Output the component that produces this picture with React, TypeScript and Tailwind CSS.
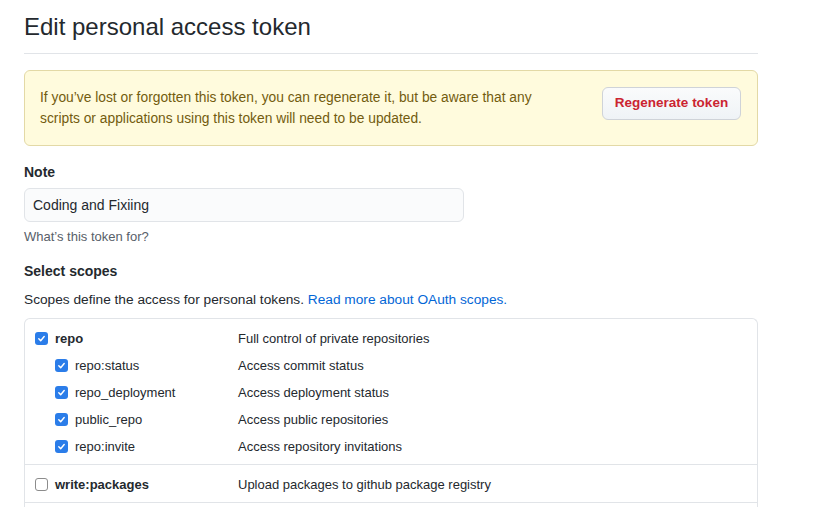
import React from "react";

const font = { fontFamily: '"Liberation Sans", Arial, sans-serif' };

function Check({ checked }: { checked: boolean }) {
  if (checked) {
    return (
      <span className="flex h-[13px] w-[13px] shrink-0 items-center justify-center rounded-[3px] bg-[#2b7de9]">
        <svg width="9" height="9" viewBox="0 0 10 10" fill="none">
          <path d="M2 5.3 L4.1 7.4 L8 2.8" stroke="white" strokeWidth="1.6" strokeLinecap="round" strokeLinejoin="round" />
        </svg>
      </span>
    );
  }
  return <span className="block h-[13px] w-[13px] shrink-0 rounded-[3px] border border-[#8c8c8c] bg-white" />;
}

type Row = { name: string; desc: string; sub?: boolean; checked: boolean; bold?: boolean };

function ScopeRow({ r }: { r: Row }) {
  return (
    <div className="flex h-[27px] items-center">
      <div className={`flex w-[203px] shrink-0 items-center gap-[7px] ${r.sub ? "pl-[20px]" : ""}`}>
        <Check checked={r.checked} />
        <span className={`text-[13px] text-[#24292e] ${r.bold ? "font-bold" : ""}`}>{r.name}</span>
      </div>
      <span className="text-[13px] text-[#24292e]">{r.desc}</span>
    </div>
  );
}

export default function App() {
  const repoRows: Row[] = [
    { name: "repo", desc: "Full control of private repositories", checked: true, bold: true },
    { name: "repo:status", desc: "Access commit status", checked: true, sub: true },
    { name: "repo_deployment", desc: "Access deployment status", checked: true, sub: true },
    { name: "public_repo", desc: "Access public repositories", checked: true, sub: true },
    { name: "repo:invite", desc: "Access repository invitations", checked: true, sub: true },
  ];
  return (
    <div className="min-h-[507px] bg-white text-[#24292e]" style={font}>
      <div className="w-[782px] px-6">
        <h2 className="border-b border-[#e1e4e8] pt-[12px] pb-[11px] text-[24px] leading-[30px] font-normal">
          Edit personal access token
        </h2>
        <div className="mt-4 flex items-start justify-between rounded-[6px] border border-[#e3d9a6] bg-[#fffbdd] py-4 pr-4 pl-[15px]">
          <p className="text-[13.8px] leading-[21px] text-[#735c0f]">
            If you’ve lost or forgotten this token, you can regenerate it, but be aware that any
            <br />
            scripts or applications using this token will need to be updated.
          </p>
          <button className="h-[33px] w-[139px] rounded-[6px] border border-[#cfd3d8] bg-gradient-to-b from-[#fafbfc] to-[#eff3f6] text-[13.5px] font-semibold text-[#cb2431]">
            Regenerate token
          </button>
        </div>
        <div className="mt-[16px] text-[14px] leading-[21px] font-bold">Note</div>
        <div className="mt-[5px] flex h-[34px] w-[440px] items-center rounded-[6px] border border-[#e1e4e8] bg-[#fafbfc] px-2 text-[14px] text-[#24292e]">
          Coding and Fixiing
        </div>
        <div className="mt-[6px] text-[13px] leading-[18px] text-[#586069]">What’s this token for?</div>
        <div className="mt-[15px] text-[14px] leading-[21px] font-bold">Select scopes</div>
        <div className="mt-[7px] text-[13.7px] leading-[21px]">
          Scopes define the access for personal tokens.{" "}
          <span className="text-[#0366d6]">Read more about OAuth scopes.</span>
        </div>
        <div className="mt-[8px] rounded-t-[6px] border border-b-0 border-[#e1e4e8]">
          <div className="border-b border-[#e1e4e8] pt-[6px] pb-[4px] pl-[10px]">
            {repoRows.map((r) => (
              <ScopeRow key={r.name} r={r} />
            ))}
          </div>
          <div className="border-b border-[#e1e4e8] pt-[6px] pb-[4px] pl-[10px]">
            <ScopeRow r={{ name: "write:packages", desc: "Upload packages to github package registry", checked: false, bold: true }} />
          </div>
          <div className="h-[20px]" />
        </div>
      </div>
    </div>
  );
}
